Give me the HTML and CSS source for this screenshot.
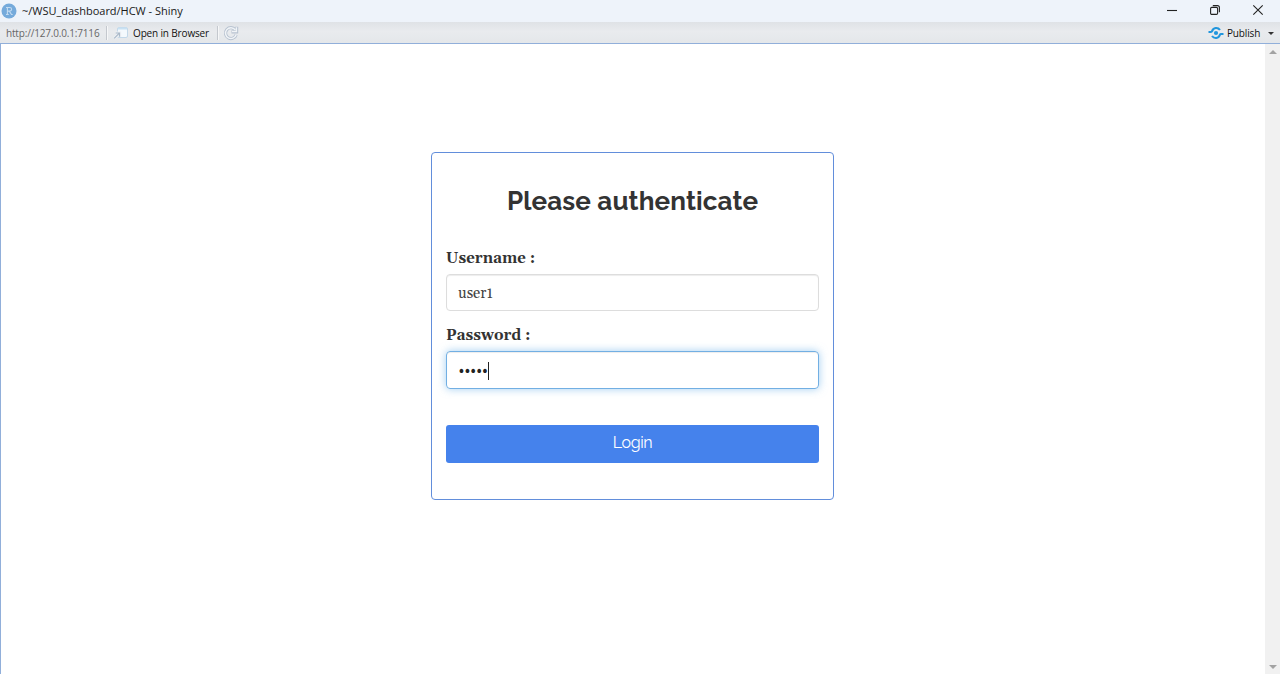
FILE: index.html
```html
<!DOCTYPE html>
<html lang="en">
<head>
<meta charset="utf-8">
<title>~/WSU_dashboard/HCW - Shiny</title>
<link rel="stylesheet" href="styles.css">
</head>
<body>
<header class="titlebar">
  <svg class="logo" viewBox="0 0 16 16"><circle cx="8" cy="8" r="7.5" fill="#75aadb"/><path d="M5 4.5h3.6c2.7 0 2.7 3.6 0 3.6H6.4M6.4 4.5v7M5 11.5h2.8M8.3 8.1l2.2 3.4h1.2" fill="none" stroke="#c3dbf1" stroke-width="1.1"/></svg>
  <span class="window-title">~/WSU_dashboard/HCW - Shiny</span>
  <div class="controls">
    <svg viewBox="0 0 12 12"><path d="M1 6.5h10" /></svg>
    <svg viewBox="0 0 12 12"><rect x="1.6" y="3.4" width="7" height="7" rx="1.2"/><path d="M3.8 1.6h4.6q2 0 2 2v4.6"/></svg>
    <svg viewBox="0 0 12 12"><path d="M1.3 1.3l9.4 9.4M10.7 1.3l-9.4 9.4"/></svg>
  </div>
</header>
<nav class="toolbar">
  <span class="url">http://127.0.0.1:7116</span>
  <i class="sep"></i>
  <svg class="open-icon" viewBox="0 0 16 14"><rect x="4.5" y="1.5" width="10" height="10" rx="1.5" fill="#f4f9fd" stroke="#c3d8e9"/><path d="M5 2.5h9" stroke="#c8e1f3" stroke-width="2"/><path d="M1.2 12.3L5.5 8M2.7 7h4v4" fill="none" stroke="#edf0f4" stroke-width="3"/><path d="M1.2 12.3L5.8 7.7M2.7 7h3.8v3.8" fill="none" stroke="#a9b8c8" stroke-width="1.2"/></svg>
  <span class="open">Open in Browser</span>
  <i class="sep sep-reload"></i>
  <svg class="reload" viewBox="0 0 16 16"><path d="M12.2 4.8A5.4 5.4 0 1 0 13.1 9.7M13.6 1.8v5.1H8.5" fill="none" stroke="#b7c2d0" stroke-width="3.2"/><path d="M12.2 4.8A5.4 5.4 0 1 0 13.1 9.7M13.4 2.3v4.3H9" fill="none" stroke="#f1f4f7" stroke-width="1.5"/></svg>
  <svg class="publish-icon" viewBox="0 0 16 14"><circle cx="8" cy="7" r="2.1" fill="#2196dd"/><path d="M.5 6h2.4q.9 0 1.2-.8C5.2 1.4 9.8 1 12 4M15.5 8h-2.4q-.9 0-1.2.8C10.8 12.6 6.2 13 4 10" fill="none" stroke="#2196dd" stroke-width="2.1"/></svg>
  <span class="publish">Publish</span>
  <i class="caret"></i>
</nav>
<div class="viewer">
  <main class="page">
    <form class="panel">
      <h1>Please authenticate</h1>
      <label class="label-user">Username :</label>
      <div class="field"><span class="value">user1</span></div>
      <label class="label-pass">Password :</label>
      <div class="field focused"><span class="dots">•••••</span><i class="cursor"></i></div>
      <button type="button">Login</button>
    </form>
  </main>
  <aside class="scrollbar"><i class="up"></i><i class="down"></i></aside>
</div>
</body>
</html>
```
FILE: styles.css
```css
* { box-sizing: border-box; }
body { margin: 0; height: 674px; overflow: hidden; display: flex; flex-direction: column; background: #fff; font-family: "Noto Sans", sans-serif; }
svg { display: block; flex: none; }
.titlebar { height: 22px; flex: none; display: flex; align-items: center; background: #eef3fa; padding-left: 1px; }
.logo { width: 16px; height: 16px; margin-top: -1px; }
.window-title { margin-left: 5px; font: 11px/22px "Open Sans", sans-serif; color: #191919; letter-spacing: -.02px; white-space: nowrap; }
.controls { margin-left: auto; display: flex; gap: 31px; padding-right: 16px; margin-top: -3px; }
.controls svg { width: 12px; height: 12px; fill: none; stroke: #222; stroke-width: 1.1; }
.toolbar { height: 22px; flex: none; display: flex; align-items: center; padding: 0 6px 0 6px; background: linear-gradient(#dfe2e6, #e9ebee 45%, #e4e7ea); border-bottom: 1px solid #91afda; font: 10px/20px "Open Sans", sans-serif; color: #111; white-space: nowrap; }
.url { width: 94px; color: #666; letter-spacing: -.17px; }
.sep { width: 1px; height: 14px; margin-left: 6px; background: #c4c8ce; box-shadow: 1px 0 #f6f7f8; }
.open-icon { width: 16px; height: 14px; margin-left: 6px; }
.open { margin-left: 4px; width: 77px; padding-top: 1px; letter-spacing: -.15px; }
.sep-reload { margin-left: 7px; }
.reload { width: 16px; height: 16px; margin-left: 5px; }
.publish-icon { width: 16px; height: 14px; margin-left: auto; }
.publish { margin-left: 3px; width: 34px; padding-top: 1px; letter-spacing: -.15px; }
.caret { margin-left: 7px; margin-top: 1px; border: 3px solid transparent; border-top-color: #333; border-bottom: 0; }
.viewer { flex: 1; display: flex; border-left: 1px solid #91afda; }
.page { flex: 1; padding: 108px 0 0 430px; }
.scrollbar { width: 15px; background: #f1f1f1; display: flex; flex-direction: column; align-items: center; justify-content: space-between; padding: 6px 0 5px; }
.up, .down { border: 4px solid transparent; }
.up { border-bottom-color: #a3a3a3; border-top: 0; }
.down { border-top-color: #a3a3a3; border-bottom: 0; }
.panel { width: 403px; height: 348px; border: 1px solid #628edb; border-radius: 4px; padding: 0 14px; display: flex; flex-direction: column; }
h1 { margin: 31px 0 0; height: 34px; text-align: center; font: 700 26px/34px Raleway, Lato, sans-serif; letter-spacing: .12px; color: #333; white-space: nowrap; }
label { height: 20px; font: bold 15px/20px Gelasio, "Liberation Serif", serif; letter-spacing: .02px; color: #333; }
.label-user { padding-top: 1px; margin-top: 30px; }
.label-pass { padding-top: 1px; margin-top: 14px; }
.field { height: 37px; margin-top: 6px; flex: none; border: 1px solid #ddd; border-radius: 4px; padding: 3px 0 0 12px; display: flex; align-items: center; color: #444; box-shadow: inset 0 1px 1px #00000013; font: 15px/20px Gelasio, "Liberation Serif", serif; }
.value { margin-left: -1px; }
.focused { height: 38px; border-color: #72afe3; box-shadow: inset 0 1px 1px #00000013, 0 0 8px #66afe999; }
.dots { color: #222; margin-left: -.5px; }
.cursor { width: 1px; height: 18px; background: #222; margin-top: -2px; margin-left: .5px; }
button { height: 38px; flex: none; margin-top: 36px; border: 0; border-radius: 3px; padding: 0 0 2px; background: #4582ec; color: #fff; font: 16px/20px Raleway, Lato, sans-serif; letter-spacing: -.35px; }
```
